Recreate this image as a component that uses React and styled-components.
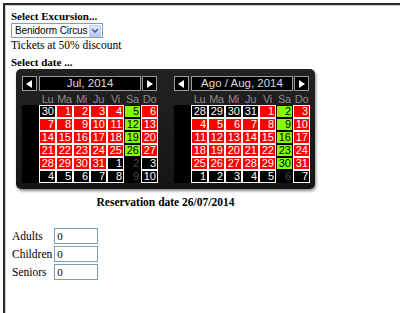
import styled, { createGlobalStyle } from "styled-components";

const Global = createGlobalStyle`
  html, body {
    margin: 0;
    padding: 0;
    background: #ffffff;
  }
  body {
    font-family: "Liberation Serif", "Times New Roman", serif;
    font-size: 11px;
    color: #000;
  }
`;

const Frame = styled.div`
  margin: 3px 0 0 3px;
  height: 310px;
  box-sizing: border-box;
  border-top: 2px solid #2b2b2b;
  border-left: 2px solid #2b2b2b;
  box-shadow: inset 1px 1px 0 #c4ccd4;
  padding: 4px 0 0 6px;
  overflow: hidden;
`;

const Heading = styled.div`
  font-weight: bold;
  font-size: 11px;
  line-height: 14px;
  margin-top: ${(p) => p.$top || 0}px;
`;

const Line = styled.div`
  line-height: 14px;
  font-size: 11.5px;
`;

const SelectBox = styled.div`
  display: inline-flex;
  align-items: center;
  gap: 2px;
  box-sizing: border-box;
  height: 15px;
  border: 1px solid #7f9db9;
  background: #fff;
  font-family: "Liberation Sans", Arial, sans-serif;
  font-size: 10px;
  letter-spacing: -0.1px;
  vertical-align: top;
`;

const SelectText = styled.span`
  padding-left: 3px;
  line-height: 13px;
  white-space: nowrap;
`;

const SelectArrow = styled.span`
  flex: none;
  width: 12px;
  height: 12px;
  margin-right: 1px;
  box-sizing: border-box;
  border: 1px solid #b8cbf0;
  border-radius: 1px;
  background: linear-gradient(#dfe9fc, #b7cdf7);
  display: flex;
  align-items: center;
  justify-content: center;
`;

const DateSection = styled.div`
  width: 299px;
  margin-left: 5px;
`;

const CalendarPanel = styled.div`
  display: flex;
  gap: 17px;
  padding: 7px 5px 6px 6px;
  background: linear-gradient(#222, #151515);
  border-radius: 5px;
  box-shadow: 1px 2px 3px #8a8a8a;
`;

const Month = styled.div`
  width: 135px;
  font-family: "Liberation Sans", Arial, sans-serif;
`;

const MonthHeader = styled.div`
  display: flex;
  gap: 1px;
  height: 15px;
`;

const NavButton = styled.div`
  width: 15px;
  height: 15px;
  box-sizing: border-box;
  border: 1px solid #9a9a9a;
  background: #000;
  display: flex;
  align-items: center;
  justify-content: center;
`;

const MonthTitle = styled.div`
  flex: 1;
  margin-left: 1px;
  box-sizing: border-box;
  border: 1px solid #9a9a9a;
  background: #000;
  color: #dcdcdc;
  font-size: 11.5px;
  line-height: 13px;
  text-align: center;
`;

const WeekDays = styled.div`
  display: grid;
  grid-template-columns: 17px repeat(7, 17px);
  margin-top: 2px;
  height: 12px;
  color: #8c8c8c;
  font-size: 11px;
  line-height: 12px;
  letter-spacing: -0.3px;
  text-align: center;
  white-space: nowrap;
`;

const DayGrid = styled.div`
  display: grid;
  grid-template-columns: 17px repeat(7, 17px);
  grid-auto-rows: 13px;
`;

const WeekCell = styled.div`
  background: #000;
`;

const cellColors = {
  r: { bg: "#ff0000", fg: "#ffffff", bd: "#ffffff" },
  g: { bg: "#84ff00", fg: "#000000", bd: "#000000" },
  b: { bg: "#000000", fg: "#ffffff", bd: "#ffffff" },
  d: { bg: "#000000", fg: "#4a4a4a", bd: "#000000" },
};

const DayCell = styled.div`
  box-sizing: border-box;
  border: 1px solid ${(p) => cellColors[p.$kind].bd};
  background: ${(p) => cellColors[p.$kind].bg};
  color: ${(p) => cellColors[p.$kind].fg};
  font-size: 11px;
  line-height: 11px;
  text-align: right;
  padding-right: 1px;
  overflow: hidden;
`;

const Reservation = styled.div`
  margin-top: 6px;
  font-weight: bold;
  font-size: 11.5px;
  line-height: 14px;
  text-align: center;
`;

const PeopleForm = styled.div`
  display: grid;
  grid-template-columns: auto 44px;
  justify-content: start;
  align-items: center;
  column-gap: 2px;
  row-gap: 2px;
  margin-top: 19px;
  padding-left: 1px;
`;

const Label = styled.label`
  font-size: 11.5px;
  line-height: 16px;
`;

const NumberInput = styled.input`
  box-sizing: border-box;
  width: 44px;
  height: 16px;
  margin: 0;
  padding: 0 2px;
  border: 1px solid #7f9db9;
  font-family: "Liberation Serif", "Times New Roman", serif;
  font-size: 11px;
`;

const Triangle = ({ dir }) => (
  <svg width="7" height="8" viewBox="0 0 7 8">
    {dir === "left" ? (
      <polygon points="6,0 6,8 0,4" fill="#fff" />
    ) : (
      <polygon points="1,0 1,8 7,4" fill="#fff" />
    )}
  </svg>
);

const weekDays = ["Lu", "Ma", "Mi", "Ju", "Vi", "Sa", "Do"];

const july = [
  [[30, "b"], [1, "r"], [2, "r"], [3, "r"], [4, "r"], [5, "g"], [6, "r"]],
  [[7, "r"], [8, "r"], [9, "r"], [10, "r"], [11, "r"], [12, "g"], [13, "r"]],
  [[14, "r"], [15, "r"], [16, "r"], [17, "r"], [18, "r"], [19, "g"], [20, "r"]],
  [[21, "r"], [22, "r"], [23, "r"], [24, "r"], [25, "r"], [26, "g"], [27, "r"]],
  [[28, "r"], [29, "r"], [30, "r"], [31, "r"], [1, "b"], [2, "d"], [3, "b"]],
  [[4, "b"], [5, "b"], [6, "b"], [7, "b"], [8, "b"], [9, "d"], [10, "b"]],
];

const august = [
  [[28, "b"], [29, "b"], [30, "b"], [31, "b"], [1, "r"], [2, "g"], [3, "r"]],
  [[4, "r"], [5, "r"], [6, "r"], [7, "r"], [8, "r"], [9, "g"], [10, "r"]],
  [[11, "r"], [12, "r"], [13, "r"], [14, "r"], [15, "r"], [16, "g"], [17, "r"]],
  [[18, "r"], [19, "r"], [20, "r"], [21, "r"], [22, "r"], [23, "g"], [24, "r"]],
  [[25, "r"], [26, "r"], [27, "r"], [28, "r"], [29, "r"], [30, "g"], [31, "r"]],
  [[1, "b"], [2, "b"], [3, "b"], [4, "b"], [5, "b"], [6, "d"], [7, "b"]],
];

const MonthView = ({ title, weeks }) => (
  <Month>
    <MonthHeader>
      <NavButton>
        <Triangle dir="left" />
      </NavButton>
      <MonthTitle>{title}</MonthTitle>
      <NavButton>
        <Triangle dir="right" />
      </NavButton>
    </MonthHeader>
    <WeekDays>
      <span />
      {weekDays.map((d) => (
        <span key={d}>{d}</span>
      ))}
    </WeekDays>
    <DayGrid>
      {weeks.map((week, i) => [
        <WeekCell key={"w" + i} />,
        ...week.map(([n, kind], j) => (
          <DayCell key={i + "-" + j} $kind={kind}>
            {n}
          </DayCell>
        )),
      ])}
    </DayGrid>
  </Month>
);

const App = () => {
  return (
    <Frame>
      <Global />
      <Heading>Select Excursion...</Heading>
      <SelectBox>
        <SelectText>Benidorm Circus</SelectText>
        <SelectArrow>
          <svg width="8" height="6" viewBox="0 0 8 6">
            <polyline
              points="1,1 4,4 7,1"
              fill="none"
              stroke="#4d6185"
              strokeWidth="1.6"
            />
          </svg>
        </SelectArrow>
      </SelectBox>
      <Line>Tickets at 50% discount</Line>
      <Heading $top={3}>Select date ...</Heading>
      <DateSection>
        <CalendarPanel>
          <MonthView title="Jul, 2014" weeks={july} />
          <MonthView title="Ago / Aug, 2014" weeks={august} />
        </CalendarPanel>
        <Reservation>Reservation date 26/07/2014</Reservation>
      </DateSection>
      <PeopleForm>
        <Label>Adults</Label>
        <NumberInput defaultValue="0" />
        <Label>Children</Label>
        <NumberInput defaultValue="0" />
        <Label>Seniors</Label>
        <NumberInput defaultValue="0" />
      </PeopleForm>
    </Frame>
  );
};

export default App;
